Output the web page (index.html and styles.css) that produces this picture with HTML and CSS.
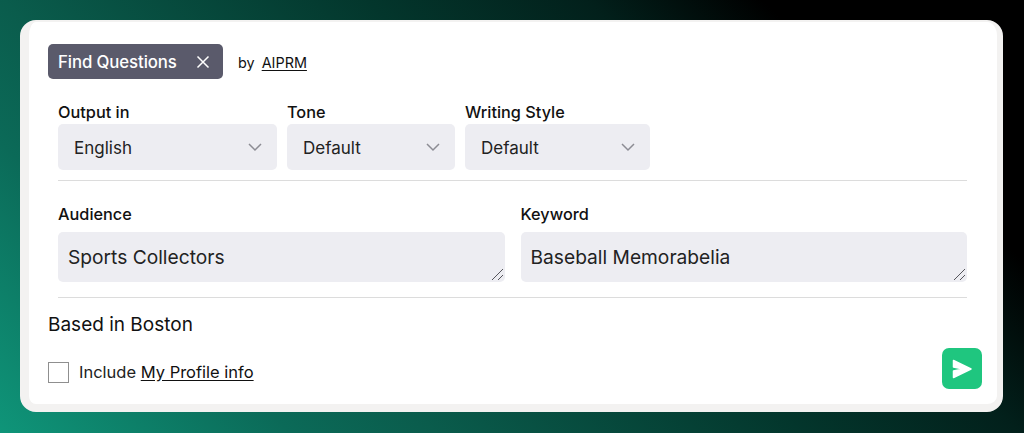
FILE: index.html
```html
<!DOCTYPE html>
<html lang="en">
<head>
<meta charset="utf-8">
<title>Find Questions</title>
<link rel="stylesheet" href="styles.css">
</head>
<body>
<main class="card">
  <div class="head">
    <div class="chip"><span>Find Questions</span>
      <svg class="chip-x" width="14" height="14" viewBox="0 0 14 14"><path d="M1.500 1.500l11 11M12.500 1.500l-11 11" stroke="#fff" stroke-width="1.500" fill="none"/></svg>
    </div>
    <div class="by">by <a class="by-link">AIPRM</a></div>
  </div>
  <div class="fields">
    <div class="selects">
      <div class="field w-output"><div class="label">Output in</div>
        <div class="select"><span>English</span><svg class="chev" width="16" height="10" viewBox="0 0 16 10"><path d="M2 2l6 6 6-6" stroke="#8c8c94" stroke-width="1.500" fill="none"/></svg></div></div>
      <div class="field w-tone"><div class="label">Tone</div>
        <div class="select"><span>Default</span><svg class="chev" width="16" height="10" viewBox="0 0 16 10"><path d="M2 2l6 6 6-6" stroke="#8c8c94" stroke-width="1.500" fill="none"/></svg></div></div>
      <div class="field w-style"><div class="label">Writing Style</div>
        <div class="select"><span>Default</span><svg class="chev" width="16" height="10" viewBox="0 0 16 10"><path d="M2 2l6 6 6-6" stroke="#8c8c94" stroke-width="1.500" fill="none"/></svg></div></div>
    </div>
    <hr class="rule rule-a">
    <div class="inputs">
      <div class="field grow"><div class="label label-gap">Audience</div>
        <div class="area"><span>Sports Collectors</span><svg class="grip" width="13" height="13" viewBox="0 0 13 13"><path d="M1 12L12 1M7 12l5-5" stroke="#55555c" stroke-width="1" fill="none"/></svg></div></div>
      <div class="field grow"><div class="label label-gap">Keyword</div>
        <div class="area"><span>Baseball Memorabelia</span><svg class="grip" width="13" height="13" viewBox="0 0 13 13"><path d="M1 12L12 1M7 12l5-5" stroke="#55555c" stroke-width="1" fill="none"/></svg></div></div>
    </div>
    <hr class="rule rule-b">
  </div>
  <p class="note">Based in Boston</p>
  <div class="foot">
    <span class="check"></span>
    <span class="include">Include <a class="profile">My Profile info</a></span>
    <button class="send" type="button" aria-label="Send">
      <svg width="22" height="20" viewBox="0 0 22 20"><path d="M2.500 1.500L20 10 2.500 18.500V12L12 10 2.500 8z" fill="#fff" stroke="#fff" stroke-width="1.500" stroke-linejoin="round"/></svg>
    </button>
  </div>
</main>
</body>
</html>
```
FILE: styles.css
```css
* { box-sizing: border-box; }
html, body { height: 100%; }
body {
  margin: 0;
  padding: 20px 0 0 20px;
  overflow: hidden;
  font-family: Inter, "Liberation Sans", sans-serif;
  color: #111;
  background: linear-gradient(45deg, #0f9579 0%, #0b6a58 20%, #0a5c4c 30%, #03362c 55%, #02201b 70%, #000 82%);
}
.card {
  width: 983px;
  height: 392px;
  background: #fff;
  border-style: solid;
  border-color: #f3f2f1;
  border-width: 2px 6px 8px 9px;
  border-radius: 16px;
  padding: 22px 30px 0 19px;
  display: flex;
  flex-direction: column;
}
.head { display: flex; align-items: center; gap: 15px; height: 35px; }
.chip {
  width: 175px;
  height: 35px;
  background: #5a5a6b;
  border-radius: 5px;
  color: #fff;
  font-size: 16.800px;
  font-weight: 500;
  letter-spacing: -.1px;
  display: flex;
  align-items: center;
  justify-content: space-between;
  padding: 0 13px 0 10px;
}
.by { font-size: 14.400px; word-spacing: 3px; color: #111; padding-top: 1px; }
.by-link { text-decoration: underline; text-underline-offset: 2px; }
.fields { padding: 0 0 0 10px; }
.selects { display: flex; gap: 10px; margin-top: 23px; }
.field { display: flex; flex-direction: column; }
.w-output { width: 219px; }
.w-tone { width: 168px; }
.w-style { width: 185px; }
.label { font-size: 16.300px; font-weight: 550; line-height: 20px; height: 22px; }
.label-gap { margin-bottom: 6px; }
.select {
  height: 46px;
  background: #ededf2;
  border-radius: 5px;
  display: flex;
  align-items: center;
  justify-content: space-between;
  padding: 2px 14px 0 16px;
  font-size: 17px;
  color: #222;
}
.chev { margin-top: -2px; }
.rule { border: 0; border-top: 1px solid #dcdcdc; margin: 0; }
.rule-a { margin-top: 10px; }
.rule-b { margin-top: 15px; }
.inputs { display: flex; gap: 16px; margin-top: 23px; }
.grow { flex: 1 1 0; }
.area {
  height: 50px;
  background: #ededf2;
  border-radius: 5px;
  display: flex;
  align-items: center;
  justify-content: space-between;
  padding: 0 0 0 10px;
  font-size: 19.200px;
  position: relative;
  color: #222;
}
.area span { padding-bottom: 1px; }
.grip { position: absolute; right: 1px; bottom: 1px; }
.note { margin: 14px 0 0; font-size: 19px; line-height: 26px; color: #111; }
.foot { display: flex; align-items: center; margin-top: 13px; height: 42px; }
.check { width: 21px; height: 21px; border: 1px solid #8f8f8f; background: #fff; }
.include { margin-left: 10px; font-size: 16.500px; color: #222; }
.profile { text-decoration: underline; text-underline-offset: 2px; color: #111; }
.send {
  margin-left: auto;
  margin-right: -15px;
  margin-top: -7px;
  width: 40px;
  height: 41px;
  border: 0;
  padding: 0;
  border-radius: 7px;
  background: #1fc67f;
  display: flex;
  align-items: center;
  justify-content: center;
}
```
